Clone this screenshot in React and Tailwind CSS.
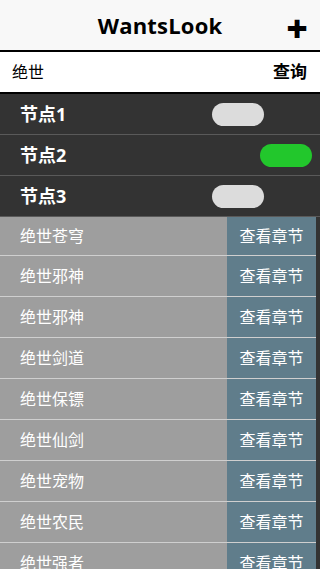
import React, { useState } from 'react';

const font = { fontFamily: '"Open Sans", "Noto Sans CJK SC", sans-serif' };

const nodes = [
  { name: '节点1', on: false },
  { name: '节点2', on: true },
  { name: '节点3', on: false },
];

const books = ['绝世苍穹', '绝世邪神', '绝世邪神', '绝世剑道', '绝世保镖', '绝世仙剑', '绝世宠物', '绝世农民', '绝世强者', '绝世武神'];

const Toggle = ({ on, onClick }) => (
  <button
    onClick={onClick}
    className={`h-[23px] w-[52px] rounded-full ${on ? 'bg-[#22c72c] mr-2' : 'bg-[#dcdcdc] mr-14'}`}
  />
);

export default function App() {
  const [state, setState] = useState(nodes.map(n => n.on));
  const [query, setQuery] = useState('绝世');

  return (
    <div className="w-[320px] h-[569px] overflow-hidden bg-[#333333] flex flex-col" style={font}>
      {/* header */}
      <div className="h-[50px] shrink-0 bg-[#f8f8f8] relative flex items-center justify-center">
        <span className="text-[22px] font-bold text-black tracking-[0.2px]">WantsLook</span>
        <span className="absolute right-[12px] top-[16px] text-[37px] font-extrabold leading-[24px] text-black">+</span>
      </div>

      {/* search */}
      <div className="h-[44px] shrink-0 bg-white border-y-2 border-black flex items-center justify-between pl-[12px] pr-[13px]">
        <input
          value={query}
          onChange={e => setQuery(e.target.value)}
          className="w-[200px] text-[16px] text-black outline-none bg-transparent"
        />
        <button className="text-[17px] font-bold text-black">查询</button>
      </div>

      {/* nodes */}
      {nodes.map((n, i) => (
        <div key={n.name} className="h-[41px] shrink-0 border-b border-[#5a5a5a] last:border-[#333333] flex items-center justify-between pl-[20px]">
          <span className="text-[18px] font-bold text-white">{n.name}</span>
          <Toggle on={state[i]} onClick={() => setState(s => s.map((v, j) => (j === i ? !v : v)))} />
        </div>
      ))}

      {/* list */}
      <div className="flex-1 overflow-hidden pr-[4px]">
        {books.map((b, i) => (
          <div
            key={i}
            className={`flex border-b border-[#cfcfcf] ${i === 0 ? 'h-[39px]' : 'h-[41px]'}`}
          >
            <div className="flex-1 bg-[#9e9e9e] flex items-center pl-[20px] text-[16px] text-white">{b}</div>
            <button className="w-[89px] bg-[#607d8b] flex items-center justify-center text-[16px] text-white">查看章节</button>
          </div>
        ))}
      </div>
    </div>
  );
}
